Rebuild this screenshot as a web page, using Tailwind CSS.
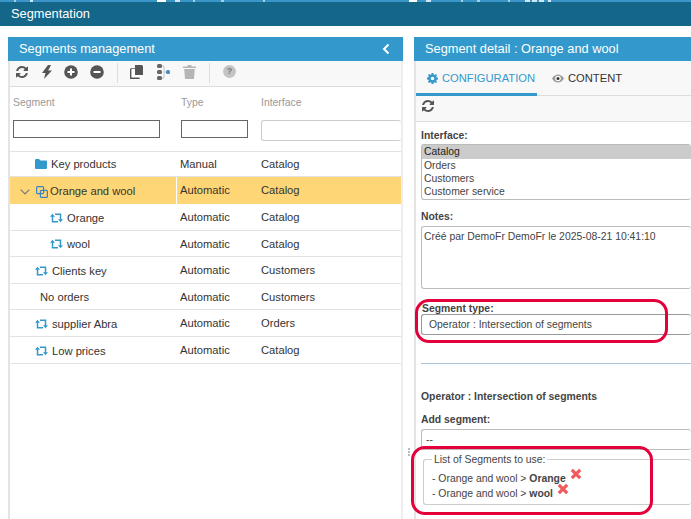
<!DOCTYPE html>
<html><head><meta charset="utf-8"><script src="https://cdn.jsdelivr.net/npm/@tailwindcss/browser@4"></script></head>
<body class="bg-white">
<div class="relative w-[691px] h-[519px] overflow-hidden bg-white font-['Liberation_Sans',Arial,sans-serif] text-[#333] text-[11.2px]">
  <div class="h-[2px] bg-[#3a96c8] flex">
    <div class="w-[14px]"></div><div class="w-[2px] bg-[#9fd0ea]"></div>
    <div class="w-[14px]"></div><div class="w-[3px] bg-[#cfe6f3]"></div>
    <div class="w-[124px]"></div><div class="w-[9px] bg-white"></div>
    <div class="w-[9px]"></div><div class="w-[5px] bg-[#cfe6f3]"></div>
    <div class="w-[13px]"></div><div class="w-[2px] bg-[#9fd0ea]"></div>
    <div class="w-[26px]"></div><div class="w-[3px] bg-[#9fd0ea]"></div>
    <div class="w-[39px]"></div><div class="w-[2px] bg-[#9fd0ea]"></div>
    <div class="w-[144px]"></div><div class="w-[8px] bg-white"></div>
    <div class="w-[9px]"></div><div class="w-[5px] bg-[#cfe6f3]"></div>
    <div class="w-[30px]"></div><div class="w-[2px] bg-[#9fd0ea]"></div>
    <div class="w-[14px]"></div><div class="w-[3px] bg-[#9fd0ea]"></div>
    <div class="w-[28px]"></div><div class="w-[2px] bg-[#9fd0ea]"></div>
    <div class="w-[15px]"></div><div class="w-[5px] bg-[#cfe6f3]"></div>
    <div class="w-[2px]"></div><div class="w-[5px] bg-[#cfe6f3]"></div>
    <div class="w-[2px]"></div><div class="w-[5px] bg-[#cfe6f3]"></div>
    <div class="w-[4px]"></div><div class="w-[3px] bg-[#cfe6f3]"></div>
  </div>
  <div class="h-[24px] bg-[#15678a] text-white text-[12.8px] pl-[11px] leading-[23px]">Segmentation</div>
  <div class="flex gap-[11px] pl-[8px] pt-[11px] h-[493px]">
    <!-- left -->
    <div class="w-[395px] shrink-0 flex flex-col">
      <div class="h-[24px] bg-[#3399cc] text-white text-[12.8px] pl-[11px] pr-[13px] flex items-center justify-between">
        <span>Segments management</span>
        <svg class="w-[8px] h-[12px]" viewBox="0 0 8 12"><path d="M6.5 1.5 2 6l4.5 4.5" fill="none" stroke="#fff" stroke-width="2"/></svg>
      </div>
      <div class="border-l-2 border-l-[#e4e4e4] border-r-2 border-r-[#eee] flex-1 flex flex-col">
        <div class="h-[26px] bg-[#f8f8f8] border-b border-[#ddd] flex items-center pl-[4px] pb-[4px] text-[#555]">
          <svg class="w-[14px] h-[14px] ml-[1px]" viewBox="0 0 1792 1792"><path fill="#555" d="M1639 1056q0 5-1 7-64 268-268 434.500t-478 166.500q-146 0-282.500-55t-243.500-157l-129 129q-19 19-45 19t-45-19-19-45v-448q0-26 19-45t45-19h448q26 0 45 19t19 45-19 45l-137 137q71 66 161 102t187 36q134 0 250-65t186-179q11-17 53-117 8-23 30-23h192q13 0 22.500 9.500t9.500 22.500zm25-800v448q0 26-19 45t-45 19h-448q-26 0-45-19t-19-45 19-45l138-138q-148-137-349-137-134 0-250 65t-186 179q-11 17-53 117-8 23-30 23h-199q-13 0-22.500-9.500t-9.500-22.500v-7q65-268 270-434.500t480-166.500q146 0 284 55.500t245 156.500l130-129q19-19 45-19t45 19 19 45z"/></svg>
          <svg class="w-[12px] h-[14px] ml-[12px]" viewBox="0 0 12 14"><path d="M7 0 1 8h3.500L3 14l8-8.500H7.200L10 0z" fill="#555"/></svg>
          <svg class="w-[14px] h-[14px] ml-[11px]" viewBox="0 0 14 14"><circle cx="7" cy="7" r="6.800" fill="#555"/><path d="M3.500 7h7M7 3.500v7" stroke="#fff" stroke-width="2"/></svg>
          <svg class="w-[14px] h-[14px] ml-[12px]" viewBox="0 0 14 14"><circle cx="7" cy="7" r="6.800" fill="#555"/><path d="M3.500 7h7" stroke="#fff" stroke-width="2"/></svg>
          <div class="w-px h-[20px] bg-[#ddd] ml-[13px] mt-[3px]"></div>
          <svg class="w-[13px] h-[14px] ml-[12px]" viewBox="0 0 13 14"><path d="M5 0h6.500A1.500 1.500 0 0 1 13 1.500V10H5z" fill="#555"/><path d="M.7 3.700h5v9.600h4" fill="none" stroke="#555" stroke-width="1.400"/><path d="M.7 3.700h4.300v6.300h4.300v3.300H.7z" fill="#fff"/><path d="M.7 3.700V13.300H9" fill="none" stroke="#555" stroke-width="1.400"/></svg>
          <svg class="w-[13px] h-[16px] ml-[14px]" viewBox="0 0 13 16"><path d="M5 2h2v12H5M7 8h2" fill="none" stroke="#c5c5c5" stroke-width="1"/><g fill="#666"><rect x="0" y="0" width="5" height="4" rx="1.500"/><rect x="0" y="6" width="5" height="4" rx="1.500"/><rect x="0" y="12" width="5" height="4" rx="1.500"/></g><rect x="9" y="6" width="4" height="4" rx="1.500" fill="#4a8fbc"/></svg>
          <svg class="w-[13px] h-[14px] ml-[13px]" viewBox="0 0 13 14"><path d="M0 1.500h13V3H0zM4.500 0h4v1.500h-4zM1.200 4h10.600l-.8 10H2z" fill="#b5b5b5"/></svg>
          <div class="w-px h-[20px] bg-[#ddd] ml-[13px] mt-[3px]"></div>
          <span class="ml-[13px] w-[13px] h-[13px] rounded-full bg-[#c4c4c4] text-[#777] text-[9px] font-bold flex items-center justify-center">?</span>
        </div>
        <div class="h-[65px] text-[#999] text-[10.4px] border-b border-[#e2e2e2] grid grid-cols-[168px_80px_1fr] pl-[3px]">
          <div class="pt-[8px]"><div>Segment</div><div class="mt-[9px] w-[147px] h-[18px] bg-white border border-[#666]"></div></div>
          <div class="pt-[8px]"><div>Type</div><div class="mt-[9px] w-[67px] h-[18px] bg-white border border-[#666]"></div></div>
          <div class="pt-[8px]"><div>Interface</div><div class="mt-[9px] h-[21px] bg-white border border-[#ccc] rounded-[3px] border-r-0"></div></div>
        </div>
        <div class="text-[#333]">
          <div class="h-[25px] grid grid-cols-[167px_81px_1fr] items-center border-b border-[#e2e2e2]">
            <div class="flex items-center pl-[25px] pt-[1px]"><svg class="w-[12px] h-[10px] mr-[4px]" viewBox="0 0 12 10"><path d="M0 1a1 1 0 0 1 1-1h3l1.500 1.500H11a1 1 0 0 1 1 1V9a1 1 0 0 1-1 1H1a1 1 0 0 1-1-1z" fill="#3399cc"/></svg><span>Key products</span></div>
            <span class="pl-[3px] pt-[1px]">Manual</span><span class="pl-[3px] pt-[1px]">Catalog</span>
          </div>
          <div class="h-[27px] grid grid-cols-[167px_81px_1fr] items-center bg-[#ffd675]">
            <div class="flex items-center pl-[10px] pt-[2px] h-full border-r border-white"><svg class="w-[10px] h-[6px] mr-[6px]" viewBox="0 0 10 6"><path d="M.7.7 5 5l4.300-4.300" fill="none" stroke="#777" stroke-width="1.200"/></svg><svg class="w-[12px] h-[12px] mr-[2px]" viewBox="0 0 12 12"><rect x=".6" y=".6" width="7" height="7" rx="1" fill="none" stroke="#3a84c0" stroke-width="1.200"/><rect x="4.400" y="4.400" width="7" height="7" rx="1" fill="none" stroke="#3a84c0" stroke-width="1.200"/></svg><span>Orange and wool</span></div>
            <span class="pl-[3px]">Automatic</span><span class="pl-[3px]">Catalog</span>
          </div>
          <div class="h-[27px] grid grid-cols-[167px_81px_1fr] items-center border-b border-[#e2e2e2]">
            <div class="flex items-center pl-[40px] pt-[2px]"><svg class="w-[13px] h-[10px] mr-[4px]" viewBox="0 0 13 10"><path d="M2.500 3v5.800H8M10.500 7V1.200H5" fill="none" stroke="#3399cc" stroke-width="1.500"/><path d="M0 3.800 2.500.8 5 3.800zM8 6.200 10.500 9.200 13 6.200z" fill="#3399cc"/></svg><span>Orange</span></div>
            <span class="pl-[3px]">Automatic</span><span class="pl-[3px]">Catalog</span>
          </div>
          <div class="h-[26px] grid grid-cols-[167px_81px_1fr] items-center border-b border-[#e2e2e2]">
            <div class="flex items-center pl-[40px] pt-[2px]"><svg class="w-[13px] h-[10px] mr-[4px]" viewBox="0 0 13 10"><path d="M2.500 3v5.800H8M10.500 7V1.200H5" fill="none" stroke="#3399cc" stroke-width="1.500"/><path d="M0 3.800 2.500.8 5 3.800zM8 6.200 10.500 9.200 13 6.200z" fill="#3399cc"/></svg><span>wool</span></div>
            <span class="pl-[3px] pt-[2px]">Automatic</span><span class="pl-[3px] pt-[2px]">Catalog</span>
          </div>
          <div class="h-[27px] grid grid-cols-[167px_81px_1fr] items-center border-b border-[#e2e2e2]">
            <div class="flex items-center pl-[25px] pt-[2px]"><svg class="w-[13px] h-[10px] mr-[4px]" viewBox="0 0 13 10"><path d="M2.500 3v5.800H8M10.500 7V1.200H5" fill="none" stroke="#3399cc" stroke-width="1.500"/><path d="M0 3.800 2.500.8 5 3.800zM8 6.200 10.500 9.200 13 6.200z" fill="#3399cc"/></svg><span>Clients key</span></div>
            <span class="pl-[3px]">Automatic</span><span class="pl-[3px]">Customers</span>
          </div>
          <div class="h-[26px] grid grid-cols-[167px_81px_1fr] items-center border-b border-[#e2e2e2]">
            <div class="pl-[30px] pt-[2px]">No orders</div>
            <span class="pl-[3px] pt-[2px]">Automatic</span><span class="pl-[3px] pt-[2px]">Customers</span>
          </div>
          <div class="h-[27px] grid grid-cols-[167px_81px_1fr] items-center border-b border-[#e2e2e2]">
            <div class="flex items-center pl-[25px] pt-[2px]"><svg class="w-[13px] h-[10px] mr-[4px]" viewBox="0 0 13 10"><path d="M2.500 3v5.800H8M10.500 7V1.200H5" fill="none" stroke="#3399cc" stroke-width="1.500"/><path d="M0 3.800 2.500.8 5 3.800zM8 6.200 10.500 9.200 13 6.200z" fill="#3399cc"/></svg><span>supplier Abra</span></div>
            <span class="pl-[3px]">Automatic</span><span class="pl-[3px]">Orders</span>
          </div>
          <div class="h-[27px] grid grid-cols-[167px_81px_1fr] items-center border-b border-[#e2e2e2]">
            <div class="flex items-center pl-[25px] pt-[2px]"><svg class="w-[13px] h-[10px] mr-[4px]" viewBox="0 0 13 10"><path d="M2.500 3v5.800H8M10.500 7V1.200H5" fill="none" stroke="#3399cc" stroke-width="1.500"/><path d="M0 3.800 2.500.8 5 3.800zM8 6.200 10.500 9.200 13 6.200z" fill="#3399cc"/></svg><span>Low prices</span></div>
            <span class="pl-[3px]">Automatic</span><span class="pl-[3px]">Catalog</span>
          </div>
        </div>
      </div>
    </div>
    <!-- right -->
    <div class="flex-1 flex flex-col min-w-0 w-[277px]">
      <div class="h-[24px] bg-[#3399cc] text-white text-[12.8px] pl-[11px] flex items-center">Segment detail : Orange and wool</div>
      <div class="flex-1 border-l-2 border-l-[#e4e4e4] flex flex-col">
        <div class="h-[35px] bg-[#f8f8f8] border-b border-[#ddd] flex text-[11.2px]">
          <div class="w-[121px] h-[35px] border-b-[3px] border-[#3399cc] text-[#3399cc] flex items-center pl-[11px] pt-[2px] gap-[4px]">
            <svg class="w-[11px] h-[11px]" viewBox="0 0 12 12"><path fill-rule="evenodd" d="M5 0h2l.3 1.600 1.100.5L9.800 1.200l1.200 1.200-1 1.400.5 1.100L12 5v2l-1.500.3-.5 1.100 1 1.400-1.200 1.200-1.400-1-1.100.5L7 12H5l-.3-1.500-1.100-.5-1.400 1L1 9.800l1-1.400-.5-1.100L0 7V5l1.500-.3.5-1.100-1-1.400L2.200 1l1.400 1 1.100-.5zM6 4a2 2 0 1 0 0 4 2 2 0 0 0 0-4z" fill="#3399cc"/></svg>
            <span>CONFIGURATION</span>
          </div>
          <div class="flex items-center pl-[15px] gap-[4px] text-[#333]">
            <svg class="w-[12px] h-[9px]" viewBox="0 0 12 9"><path d="M0 4.500C2 1.500 4 .5 6 .5s4 1 6 4c-2 3-4 4-6 4s-4-1-6-4z" fill="#999"/><circle cx="6" cy="4.500" r="2.800" fill="#fff"/><circle cx="6" cy="4.500" r="1.500" fill="#333"/></svg>
            <span>CONTENT</span>
          </div>
        </div>
        <div class="h-[26px] bg-[#f8f8f8] border-b border-[#ddd] flex items-center pl-[5px] pb-[5px]">
          <svg class="w-[14px] h-[14px]" viewBox="0 0 1792 1792"><path fill="#555" d="M1639 1056q0 5-1 7-64 268-268 434.500t-478 166.500q-146 0-282.500-55t-243.500-157l-129 129q-19 19-45 19t-45-19-19-45v-448q0-26 19-45t45-19h448q26 0 45 19t19 45-19 45l-137 137q71 66 161 102t187 36q134 0 250-65t186-179q11-17 53-117 8-23 30-23h192q13 0 22.500 9.500t9.500 22.500zm25-800v448q0 26-19 45t-45 19h-448q-26 0-45-19t-19-45 19-45l138-138q-148-137-349-137-134 0-250 65t-186 179q-11 17-53 117-8 23-30 23h-199q-13 0-22.500-9.500t-9.500-22.500v-7q65-268 270-434.500t480-166.500q146 0 284 55.500t245 156.500l130-129q19-19 45-19t45 19 19 45z"/></svg>
        </div>
        <div class="pl-[5px] text-[#444] text-[10.4px]">
          <div class="font-bold mt-[8px] h-[12px] leading-[12px]">Interface:</div>
          <div class="mt-[2px] h-[56px] border border-[#bbb] rounded-[3px] border-r-0 leading-[13px] overflow-hidden">
            <div class="bg-[#cbcbcb] h-[14px] pl-[2px] text-[#222] leading-[14px]">Catalog</div>
            <div class="pl-[2px]">Orders</div><div class="pl-[2px]">Customers</div><div class="pl-[2px]">Customer service</div>
          </div>
          <div class="font-bold mt-[11px] h-[12px] leading-[12px]">Notes:</div>
          <div class="mt-[3px] h-[63px] border border-[#bbb] rounded-[3px] border-r-0 pl-[2px] pt-[3px] leading-[13px]">Créé par DemoFr DemoFr le 2025-08-21 10:41:10</div>
          <div class="font-bold mt-[14px] h-[12px] leading-[12px] pl-px">Segment type:</div>
          <div class="h-[21px] -mt-px border border-[#999] rounded-[3px] border-r-0 pl-[7px] flex items-center">Operator : Intersection of segments</div>
          <div class="h-px bg-[#a9c4d8] mt-[28px]"></div>
          <div class="font-bold mt-[27px] h-[12px] leading-[12px]">Operator : Intersection of segments</div>
          <div class="font-bold mt-[11px] h-[12px] leading-[12px]">Add segment:</div>
          <div class="mt-[3px] h-[21px] border border-[#bbb] rounded-[3px] border-r-0 pl-[4px] flex items-center">--</div>
          <div class="relative mt-[9px] h-[46px] ml-[2px] border border-[#ccc] rounded-[3px] border-r-0 pl-[8px] pt-[11px] leading-[15px]">
            <div class="absolute left-[8px] -top-[7px] bg-white px-[2px] h-[13px] leading-[13px] text-[#444]">List of Segments to use:</div>
            <div class="flex items-start">- Orange and wool &gt;&nbsp;<b>Orange</b>
              <svg class="w-[12px] h-[12px] ml-[4px] -mt-[3px]" viewBox="0 0 12 12"><path d="M1.800 1.800l8.400 8.400M10.200 1.800l-8.400 8.400" stroke="#f0595e" stroke-width="3.200"/></svg></div>
            <div class="flex items-start">- Orange and wool &gt;&nbsp;<b>wool</b>
              <svg class="w-[12px] h-[12px] ml-[4px] -mt-[3px]" viewBox="0 0 12 12"><path d="M1.800 1.800l8.400 8.400M10.200 1.800l-8.400 8.400" stroke="#f0595e" stroke-width="3.200"/></svg></div>
          </div>
        </div>
      </div>
    </div>
  </div>
  <!-- splitter grip -->
  <div class="absolute left-[408px] top-[448px] flex flex-col gap-px">
    <div class="w-[2px] h-[2px] bg-[#bbb]"></div><div class="w-[2px] h-[2px] bg-[#bbb]"></div><div class="w-[2px] h-[2px] bg-[#bbb]"></div>
  </div>
  <!-- annotations -->
  <div class="absolute left-[415px] top-[299px] w-[253px] h-[44px] border-[3px] border-[#e4003a] rounded-[14px]"></div>
  <div class="absolute left-[411px] top-[446px] w-[242px] h-[69px] border-[3px] border-[#e4003a] rounded-[14px]"></div>
</div>
</body></html>
